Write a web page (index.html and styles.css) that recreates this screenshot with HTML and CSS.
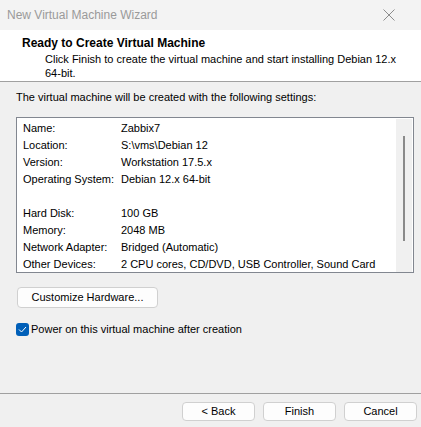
FILE: index.html
```html
<!DOCTYPE html>
<html>
<head>
<meta charset="utf-8">
<link rel="stylesheet" href="styles.css">
</head>
<body>
<div class="window">
  <div class="titlebar">
    <span class="title">New Virtual Machine Wizard</span>
    <svg class="close" width="12" height="12" viewBox="0 0 12 12"><path d="M0.5 0.5 L11.5 11.5 M11.5 0.5 L0.5 11.5" stroke="#8c8c8c" stroke-width="1" fill="none"/></svg>
  </div>
  <div class="header">
    <div class="h-title">Ready to Create Virtual Machine</div>
    <div class="h-sub">Click Finish to create the virtual machine and start installing Debian 12.x 64-bit.</div>
  </div>
  <div class="body">
    <div class="intro">The virtual machine will be created with the following settings:</div>
    <div class="listbox">
      <div class="list">
        <div class="row"><span class="k">Name:</span><span>Zabbix7</span></div>
        <div class="row"><span class="k">Location:</span><span>S:\vms\Debian 12</span></div>
        <div class="row"><span class="k">Version:</span><span>Workstation 17.5.x</span></div>
        <div class="row"><span class="k">Operating System:</span><span>Debian 12.x 64-bit</span></div>
        <div class="row"><span class="k"></span><span></span></div>
        <div class="row"><span class="k">Hard Disk:</span><span>100 GB</span></div>
        <div class="row"><span class="k">Memory:</span><span>2048 MB</span></div>
        <div class="row"><span class="k">Network Adapter:</span><span>Bridged (Automatic)</span></div>
        <div class="row"><span class="k">Other Devices:</span><span>2 CPU cores, CD/DVD, USB Controller, Sound Card</span></div>
      </div>
      <div class="scroll"><div class="thumb"></div></div>
    </div>
    <button class="btn custom">Customize Hardware...</button>
    <label class="check">
      <span class="box"><svg width="9" height="7" viewBox="0 0 9 7"><path d="M1 3.5 L3.5 6 L8 1" stroke="#ffffff" stroke-width="1" fill="none"/></svg></span>
      <span>Power on this virtual machine after creation</span>
    </label>
  </div>
  <div class="footer">
    <button class="btn fbtn">&lt; Back</button>
    <button class="btn fbtn">Finish</button>
    <button class="btn fbtn">Cancel</button>
  </div>
</div>
</body>
</html>
```
FILE: styles.css
```css
* { box-sizing: border-box; }
html, body { margin: 0; padding: 0; }
body {
  width: 421px;
  height: 427px;
  overflow: hidden;
  background: #f0f0f0;
  font-family: "Liberation Sans", Arial, sans-serif;
  font-size: 11px;
  color: #000;
}
.window { display: flex; flex-direction: column; height: 427px; }
.titlebar {
  height: 30px;
  background: #f3f3f3;
  display: flex;
  align-items: center;
  justify-content: space-between;
  padding: 0 26px 0 7px;
}
.title { color: #9a9a9a; font-size: 12px; }
.close { display: block; }
.header {
  height: 52px;
  background: #ffffff;
  border-bottom: 1px solid #a0a0a0;
  padding: 6px 0 0 22px;
  line-height: 14px;
}
.h-title { font-weight: bold; font-size: 12px; height: 16px; }
.h-sub { padding-left: 23px; width: 380px; }
.body { flex: 1; padding: 8px 0 0 16px; }
.intro { line-height: 15px; height: 27px; }
.listbox {
  width: 398px;
  height: 156px;
  border: 1px solid #828790;
  background: #fff;
  display: flex;
}
.list { flex: 1; padding: 2px 0 0 6px; }
.row { display: grid; grid-template-columns: 98px auto; height: 17px; line-height: 17px; white-space: nowrap; }
.scroll {
  width: 16px;
  margin: 1px 1px 0 0;
  background: #f0f0f0;
  display: flex;
  justify-content: center;
  padding-top: 17px;
}
.thumb { width: 2px; height: 105px; background: #8a8a8a; }
.btn {
  font: inherit;
  color: #000;
  background: #fdfdfd;
  border: 1px solid #d0d0d0;
  border-radius: 4px;
  padding: 0;
  height: 21px;
  line-height: 19px;
}
.custom { display: block; margin: 14px 0 0 1px; width: 141px; }
.check { display: flex; align-items: center; margin-top: 14px; height: 14px; gap: 2px; }
.box {
  width: 13px; height: 13px;
  background: #005fb8;
  border-radius: 3px;
  display: flex; align-items: center; justify-content: center;
}
.footer {
  height: 34px;
  border-top: 1px solid #a0a0a0;
  display: flex;
  justify-content: flex-end;
  gap: 8px;
  padding: 8px 4px 0 0;
}
.fbtn { width: 73px; height: 19px; line-height: 17px; }
```
